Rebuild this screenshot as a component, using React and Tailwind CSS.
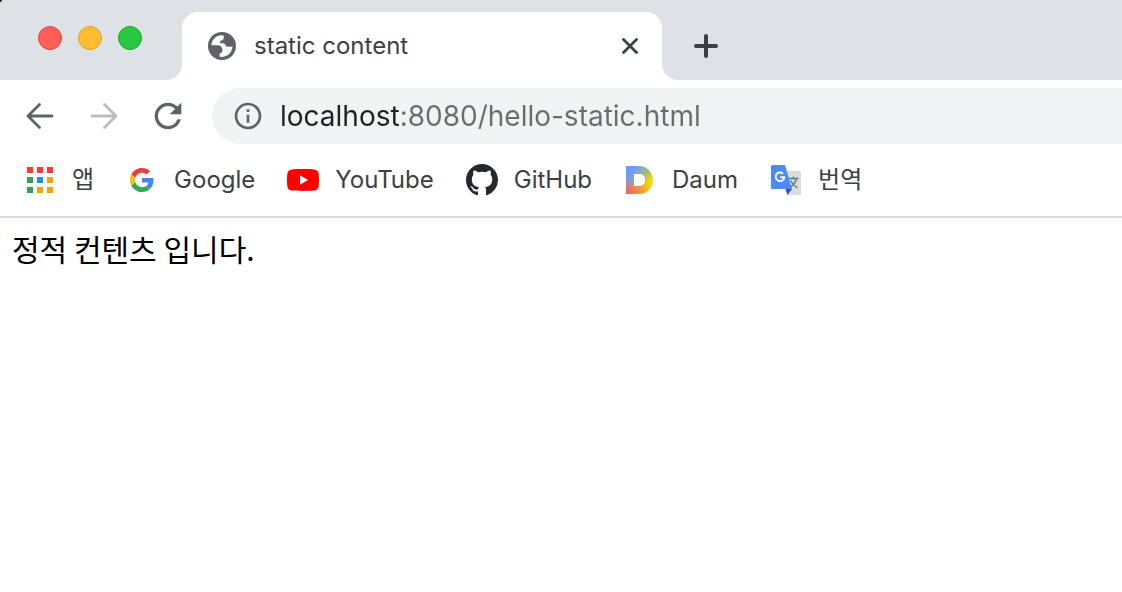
import React from 'react';
import { MdInfoOutline, MdRefresh } from 'react-icons/md';

const GlobeIcon = () => (
    <svg viewBox="0 0 28 28" className="size-7 shrink-0" aria-hidden="true">
        <circle cx="14" cy="14" r="14" fill="#5f6368" />
        <path
            d="M3.4 13.2C3.8 7.8 7.5 3.9 12.5 3.2l3.4.5c.2 2.2-.5 4-1.9 4.7l-1.7.4c-.6.5-.2 1.5-.5 2.3 1.8.3 4.2.2 5.2 1.1.7.8.5 1.7 1.4 2.3 1.5.5 4 .3 6.1.1C24.1 20.5 19.5 25 13.5 25L11.6 24.6V21.5c1.7-.2 2.9-1.5 2.9-3.2 0-2.7-1.3-4.7-4-5.1z"
            fill="#fff"
        />
    </svg>
);

const CloseIcon = () => (
    <svg viewBox="0 0 16 16" className="size-4" aria-hidden="true">
        <path d="M1.5 1.5l13 13M14.5 1.5l-13 13" stroke="#3c4043" strokeWidth="2.8" strokeLinecap="round" />
    </svg>
);

const PlusIcon = () => (
    <svg viewBox="0 0 24 24" className="size-6" aria-hidden="true">
        <path d="M12 2v20M2 12h20" stroke="#3c4043" strokeWidth="4" strokeLinecap="round" />
    </svg>
);

const ArrowIcon = ({ className }) => (
    <svg viewBox="0 0 40 40" fill="none" className={className} aria-hidden="true">
        <path
            d="M8.5 20H32M19.5 8.5L8 20l11.5 11.5"
            stroke="currentColor"
            strokeWidth="2.8"
            strokeLinecap="round"
            strokeLinejoin="round"
        />
    </svg>
);

const AppsIcon = () => (
    <svg viewBox="0 0 26 26" className="size-[26px]" aria-hidden="true">
        <path d="M0 0h6v6H0zM10 0h6v6h-6zM20 0h6v6h-6z" fill="#f93a37" />
        <path d="M0 10h6v6H0zM0 20h6v6H0z" fill="#34a05a" />
        <path d="M10 10h6v6h-6z" fill="#1e8bf5" />
        <path d="M20 10h6v6h-6zM10 20h6v6h-6zM20 20h6v6h-6z" fill="#f2a305" />
    </svg>
);

const GoogleIcon = () => (
    <svg viewBox="0 0 48 48" className="size-6" aria-hidden="true">
        <path fill="#EA4335" d="M24 9.5c3.54 0 6.71 1.22 9.21 3.6l6.85-6.85C35.9 2.38 30.47 0 24 0 14.62 0 6.51 5.38 2.56 13.22l7.98 6.19C12.43 13.72 17.74 9.5 24 9.5z" />
        <path fill="#4285F4" d="M46.98 24.55c0-1.57-.15-3.09-.38-4.55H24v9.02h12.94c-.58 2.96-2.26 5.48-4.78 7.18l7.73 6c4.51-4.18 7.09-10.36 7.09-17.65z" />
        <path fill="#FBBC05" d="M10.53 28.59c-.48-1.45-.76-2.99-.76-4.59s.27-3.14.76-4.59l-7.98-6.19C.92 16.46 0 20.12 0 24c0 3.88.92 7.54 2.56 10.78l7.97-6.19z" />
        <path fill="#34A853" d="M24 48c6.48 0 11.93-2.13 15.89-5.81l-7.73-6c-2.15 1.45-4.92 2.3-8.16 2.3-6.26 0-11.57-4.22-13.47-9.91l-7.98 6.19C6.51 42.62 14.62 48 24 48z" />
    </svg>
);

const YouTubeIcon = () => (
    <svg viewBox="0 0 32 22" className="w-8" aria-hidden="true">
        <path
            d="M5 .4C9 0 23 0 27 .4c3 .2 4.4 1.6 4.7 4.6.4 4 .4 8 0 12-.3 3-1.7 4.4-4.7 4.6-4 .4-18 .4-22 0-3-.2-4.4-1.6-4.7-4.6-.4-4-.4-8 0-12C.6 2 2 .6 5 .4z"
            fill="#f00"
        />
        <path d="M13 6.2v9.6l8-4.8z" fill="#fff" />
    </svg>
);

const GitHubIcon = () => (
    <svg viewBox="0 0 16 16" className="size-8" aria-hidden="true">
        <path
            fill="#24292e"
            d="M8 0C3.58 0 0 3.58 0 8c0 3.54 2.29 6.53 5.47 7.59.4.07.55-.17.55-.38 0-.19-.01-.82-.01-1.49-2.01.37-2.53-.49-2.69-.94-.09-.23-.48-.94-.82-1.13-.28-.15-.68-.52-.01-.53.63-.01 1.08.58 1.23.82.72 1.21 1.87.87 2.33.66.07-.52.28-.87.51-1.07-1.78-.2-3.64-.89-3.64-3.95 0-.87.31-1.59.82-2.15-.08-.2-.36-1.02.08-2.12 0 0 .67-.21 2.2.82.64-.18 1.32-.27 2-.27.68 0 1.36.09 2 .27 1.53-1.04 2.2-.82 2.2-.82.44 1.1.16 1.92.08 2.12.51.56.82 1.27.82 2.15 0 3.07-1.87 3.75-3.65 3.95.29.25.54.73.54 1.48 0 1.07-.01 1.93-.01 2.2 0 .21.15.46.55.38A8.013 8.013 0 0016 8c0-4.42-3.58-8-8-8z"
        />
    </svg>
);

const DaumIcon = () => (
    <svg viewBox="0 0 28 28" className="size-7" aria-hidden="true">
        <defs>
            <linearGradient id="daum-base" x1="0" y1="0" x2="1" y2=".65">
                <stop offset=".25" stopColor="#6c9cff" />
                <stop offset=".65" stopColor="#a9bd6c" />
                <stop offset=".9" stopColor="#ffe100" />
            </linearGradient>
            <linearGradient id="daum-warm" x1="0" y1="0" x2="1" y2="0">
                <stop offset="0" stopColor="#ff5a5a" />
                <stop offset=".5" stopColor="#ff8a3c" />
                <stop offset="1" stopColor="#ffd800" />
            </linearGradient>
            <linearGradient id="daum-fade" x1="0" y1="0" x2="0" y2="1">
                <stop offset=".45" stopColor="#000" />
                <stop offset=".9" stopColor="#fff" />
            </linearGradient>
            <mask id="daum-mask">
                <path d="M0 0h28v28H0z" fill="url(#daum-fade)" />
            </mask>
        </defs>
        <path d="M0 0h13a14 14 0 0 1 0 28H0zM8 8v12h6a5 5 0 0 0 5-5v-2A5 5 0 0 0 14 8z" fill="url(#daum-base)" fillRule="evenodd" />
        <path d="M0 0h13a14 14 0 0 1 0 28H0zM8 8v12h6a5 5 0 0 0 5-5v-2A5 5 0 0 0 14 8z" fill="url(#daum-warm)" fillRule="evenodd" mask="url(#daum-mask)" />
    </svg>
);

const TranslateIcon = () => (
    <svg viewBox="0 0 30 30" fill="none" className="size-[30px]" aria-hidden="true">
        <path d="M12 6h16.5A1.5 1.5 0 0 1 30 7.5v21a1.5 1.5 0 0 1-1.5 1.5H16z" fill="#dcdcdc" />
        <path d="M17.5 13.5h10M22.5 11.5v2M25.5 13.5c-1 4-3.5 7-7 9.5M19.5 15.5c1.5 3 4 5.5 7 7.5" stroke="#607d88" strokeWidth="1.4" />
        <path d="M14.5 24H21l-4.5 6z" fill="#3b50b8" />
        <path d="M1.5 0H14l7 24H1.5A1.5 1.5 0 0 1 0 22.5v-21A1.5 1.5 0 0 1 1.5 0z" fill="#4c8bf5" />
        <path d="M12 8.7A4.3 4.3 0 1 0 13.3 12.3H9.2" stroke="#fff" strokeWidth="1.9" />
    </svg>
);

const bookmarks = [
    { label: '앱', href: '#apps', icon: <AppsIcon /> },
    { label: 'Google', href: '#google', icon: <GoogleIcon /> },
    { label: 'YouTube', href: '#youtube', icon: <YouTubeIcon /> },
    { label: 'GitHub', href: '#github', icon: <GitHubIcon /> },
    { label: 'Daum', href: '#daum', icon: <DaumIcon /> },
    { label: '번역', href: '#translate', icon: <TranslateIcon /> },
];

const TabStrip = () => (
    <div className="relative flex h-20">
        <div className="flex items-start gap-4 rounded-br-2xl bg-[#dee1e6] pt-[26px] pr-10 pl-[38px]">
            <button aria-label="Close window" className="size-6 rounded-full border border-[#e0443e] bg-[#ff5f57]" />
            <button aria-label="Minimize window" className="size-6 rounded-full border border-[#dea123] bg-[#febc2e]" />
            <button aria-label="Zoom window" className="size-6 rounded-full border border-[#1aab29] bg-[#28c840]" />
        </div>
        <div className="w-[480px] bg-linear-to-b from-[#dee1e6] from-50% to-white to-50% pt-3">
            <div className="flex h-full items-center rounded-t-2xl bg-white pr-6 pl-[26px]">
                <GlobeIcon />
                <span className="ml-[18px] flex-1 truncate text-2xl text-[#3c4043]">static content</span>
                <button aria-label="Close tab">
                    <CloseIcon />
                </button>
            </div>
        </div>
        <div className="flex flex-1 items-center rounded-bl-2xl bg-[#dee1e6] pt-3 pl-8">
            <button aria-label="New tab">
                <PlusIcon />
            </button>
        </div>
        <span className="absolute top-0 left-0 size-[2px] rounded-br-[2px] bg-black" />
    </div>
);

const Toolbar = () => (
    <div className="flex h-[72px] items-center gap-6 pl-5 text-[#5f6368]">
        <button aria-label="Back">
            <ArrowIcon className="size-10" />
        </button>
        <button aria-label="Forward" className="text-[#babcbe]">
            <ArrowIcon className="size-10 rotate-180" />
        </button>
        <button aria-label="Reload">
            <MdRefresh className="size-10" />
        </button>
        <div className="flex h-14 flex-1 items-center rounded-l-full bg-[#f1f3f4] pl-5">
            <button aria-label="Site information">
                <MdInfoOutline className="size-8" />
            </button>
            {/* the host part is darker than the rest of the URL */}
            <input
                type="text"
                aria-label="Address"
                defaultValue="localhost:8080/hello-static.html"
                className="ml-4 min-w-0 flex-1 bg-linear-to-r from-[#202124] from-[119px] to-[#6a6d70] to-[119px] bg-clip-text text-[28px] text-transparent outline-none"
            />
        </div>
    </div>
);

const BookmarksBar = () => (
    <nav className="flex h-[66px] items-start gap-8 border-b-2 border-[#dadcdc] pt-2 pl-6">
        {bookmarks.map(({ label, href, icon }) => (
            <a key={label} href={href} className="flex h-10 items-center gap-4 text-2xl whitespace-nowrap text-[#3c4043]">
                <span className="flex w-8 justify-center">{icon}</span>
                {label}
            </a>
        ))}
    </nav>
);

export default function App() {
    return (
        <div className="bg-white font-[Inter,'Noto_Sans_CJK_KR',sans-serif]">
            <header>
                <TabStrip />
                <Toolbar />
                <BookmarksBar />
            </header>
            <main className="px-3 py-2 font-['Noto_Sans_CJK_KR',sans-serif] text-[30px] text-black">
                <p>정적 컨텐츠 입니다.</p>
            </main>
        </div>
    );
}
